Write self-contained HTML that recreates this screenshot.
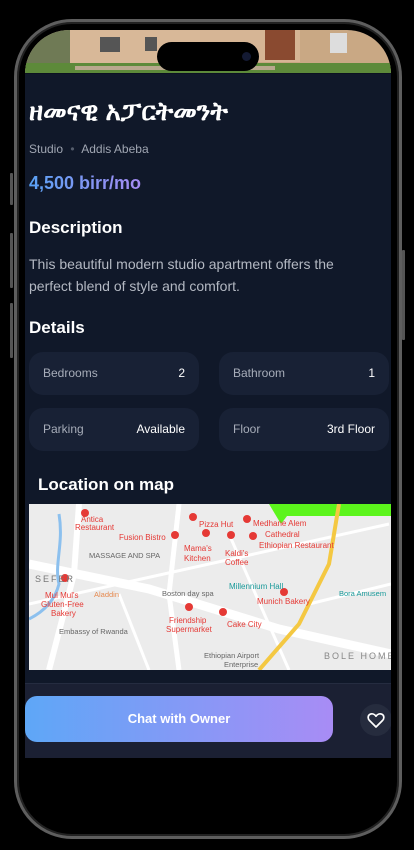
<!DOCTYPE html>
<html><head><meta charset="utf-8"><style>
*{margin:0;padding:0;box-sizing:border-box}
body{width:414px;height:850px;background:#000;overflow:hidden;position:relative;font-family:"Liberation Sans","DejaVu Sans",sans-serif}
.frame{position:absolute;left:14px;top:19px;width:388px;height:820px;border:3px solid #5e5e5e;border-radius:58px;box-shadow:inset 0 0 0 2px #222}
.screen{position:absolute;left:25px;top:30px;width:366px;height:728px;background:#101829;overflow:hidden;border-radius:44px 44px 0 0}
.btn{position:absolute;width:3px;background:#555;border-radius:1px}
.t{position:absolute;color:#fff;white-space:nowrap}
.card{position:absolute;width:170px;height:43px;background:#182135;border-radius:14px;font-size:12px}
.card .l{position:absolute;left:14px;top:14px;color:#a7adb9}
.card .v{position:absolute;right:14px;top:14px;color:#fff}
</style></head><body>
<div class="btn" style="left:10px;top:173px;height:32px"></div>
<div class="btn" style="left:10px;top:233px;height:55px"></div>
<div class="btn" style="left:10px;top:303px;height:55px"></div>
<div class="btn" style="left:402px;top:250px;height:90px"></div>
<div class="screen">
  <svg style="position:absolute;left:0;top:0" width="366" height="43">
    <rect width="366" height="43" fill="#c9a884"/>
    <rect x="0" y="0" width="45" height="43" fill="#6f7a55"/>
    <rect x="45" y="0" width="130" height="35" fill="#d8b898"/>
    <rect x="75" y="7" width="20" height="15" fill="#555"/>
    <rect x="120" y="7" width="12" height="14" fill="#555"/>
    <rect x="175" y="0" width="100" height="32" fill="#d6b595"/>
    <rect x="240" y="0" width="30" height="30" fill="#8a4a30"/>
    <rect x="305" y="3" width="17" height="20" fill="#ddd"/>
    <rect x="0" y="33" width="366" height="10" fill="#5d8a3a"/>
    <rect x="50" y="36" width="200" height="4" fill="#b9a88e"/>
  </svg>
  <div style="position:absolute;left:0;top:43px;width:366px;height:1px;background:#0c1220"></div>
  <div class="t" style="left:4px;top:66px;font-size:26px;font-weight:bold">ዘመናዊ አፓርትመንት</div>
  <div class="t" style="left:4px;top:112px;font-size:12px;color:#a0a6b2">Studio <span style="color:#555d6c;margin:0 4px">•</span> Addis Abeba</div>
  <div class="t" style="left:4px;top:143px;font-size:18px;font-weight:bold;background:linear-gradient(90deg,#5aa2f5,#a58bf3);-webkit-background-clip:text;color:transparent">4,500 birr/mo</div>
  <div class="t" style="left:4px;top:188px;font-size:17px;font-weight:bold">Description</div>
  <div class="t" style="left:4px;top:223px;font-size:14px;line-height:22px;color:#b3b8c2">This beautiful modern studio apartment offers the<br>perfect blend of style and comfort.</div>
  <div class="t" style="left:4px;top:288px;font-size:17px;font-weight:bold">Details</div>
  <div class="card" style="left:4px;top:322px"><span class="l">Bedrooms</span><span class="v">2</span></div>
  <div class="card" style="left:194px;top:322px"><span class="l">Bathroom</span><span class="v">1</span></div>
  <div class="card" style="left:4px;top:378px"><span class="l">Parking</span><span class="v">Available</span></div>
  <div class="card" style="left:194px;top:378px"><span class="l">Floor</span><span class="v">3rd Floor</span></div>
  <div class="t" style="left:13px;top:445px;font-size:17px;font-weight:bold">Location on map</div>
  <svg style="position:absolute;left:4px;top:474px" width="362" height="166" font-family="Liberation Sans,sans-serif">
    <rect width="362" height="166" fill="#ececec"/>
    <polygon points="240,0 362,0 362,12 258,12 252,20" fill="#5cf41c"/>
    <path d="M0,60 L120,85 L250,125 L362,150" stroke="#fff" stroke-width="9" fill="none"/>
    <path d="M50,0 L45,70 L20,166" stroke="#fff" stroke-width="6" fill="none"/>
    <path d="M150,0 L140,90 L150,166" stroke="#fff" stroke-width="5" fill="none"/>
    <path d="M0,100 L360,20 M200,30 L260,166 M90,90 L120,166 M280,100 L362,80" stroke="#fff" stroke-width="3" fill="none"/>
    <path d="M310,0 L300,60 L270,120 L230,166" stroke="#f4c842" stroke-width="4" fill="none"/>
    <path d="M30,10 C35,40 25,60 30,80 C25,100 10,110 0,115" stroke="#8cc0ee" stroke-width="3" fill="none"/>
    <g fill="#e53935">
      <circle cx="56" cy="9" r="4"/><circle cx="164" cy="13" r="4"/><circle cx="218" cy="15" r="4"/>
      <circle cx="177" cy="29" r="4"/><circle cx="146" cy="31" r="4"/><circle cx="202" cy="31" r="4"/><circle cx="224" cy="32" r="4"/>
      <circle cx="36" cy="74" r="4"/><circle cx="160" cy="103" r="4"/><circle cx="194" cy="108" r="4"/><circle cx="255" cy="88" r="4"/>
    </g>
    <g fill="#e53935" font-size="8">
      <text x="52" y="18">Antica</text><text x="46" y="26">Restaurant</text>
      <text x="170" y="23">Pizza Hut</text><text x="224" y="22">Medhane Alem</text><text x="236" y="33">Cathedral</text>
      <text x="90" y="36">Fusion Bistro</text><text x="230" y="44">Ethiopian Restaurant</text>
      <text x="155" y="47">Mama's</text><text x="155" y="57">Kitchen</text><text x="196" y="52">Kaldi's</text><text x="196" y="61">Coffee</text>
      <text x="16" y="94">Mul Mul's</text><text x="12" y="103">Gluten-Free</text><text x="22" y="112">Bakery</text>
      <text x="140" y="119">Friendship</text><text x="137" y="128">Supermarket</text><text x="198" y="123">Cake City</text>
      <text x="228" y="100">Munich Bakery</text>
    </g>
    <g fill="#666" font-size="7.5">
      <text x="60" y="54">MASSAGE AND SPA</text><text x="133" y="92">Boston day spa</text>
      <text x="30" y="130">Embassy of Rwanda</text><text x="175" y="154">Ethiopian Airport</text><text x="195" y="163">Enterprise</text>
    </g>
    <text x="6" y="78" fill="#777" font-size="9" letter-spacing="2">SEFER</text>
    <text x="295" y="155" fill="#888" font-size="9" letter-spacing="2">BOLE HOME</text>
    <text x="200" y="85" fill="#1a9a9a" font-size="8">Millennium Hall</text>
    <text x="310" y="92" fill="#1a9a9a" font-size="7.5">Bora Amusem</text>
    <text x="65" y="93" fill="#e68a50" font-size="7.5">Aladdin</text>
  </svg>
  <div style="position:absolute;left:0;top:653px;width:366px;height:75px;background:#1b2033;border-top:1px solid #252c40"></div>
  <div style="position:absolute;left:0;top:666px;width:308px;height:46px;border-radius:12px;background:linear-gradient(90deg,#5ea7f7,#a88cf5);color:#fff;font-size:13px;font-weight:bold;text-align:center;line-height:46px">Chat with Owner</div>
  <div style="position:absolute;left:335px;top:674px;width:32px;height:32px;border-radius:50%;background:#262c3e">
    <svg width="32" height="32" viewBox="0 0 32 32"><path d="M16 23 L9.5 16.5 C7.5 14.5 7.8 11.2 10.2 10.2 C12.3 9.3 14.6 10.3 16 12.2 C17.4 10.3 19.7 9.3 21.8 10.2 C24.2 11.2 24.5 14.5 22.5 16.5 Z" fill="none" stroke="#fff" stroke-width="1.7" stroke-linejoin="round"/></svg>
  </div>
</div>
<div style="position:absolute;left:157px;top:42px;width:102px;height:29px;border-radius:15px;background:#000"><div style="position:absolute;right:8px;top:10px;width:9px;height:9px;border-radius:50%;background:#141a33"></div></div>
<div class="frame"></div>
</body></html>
